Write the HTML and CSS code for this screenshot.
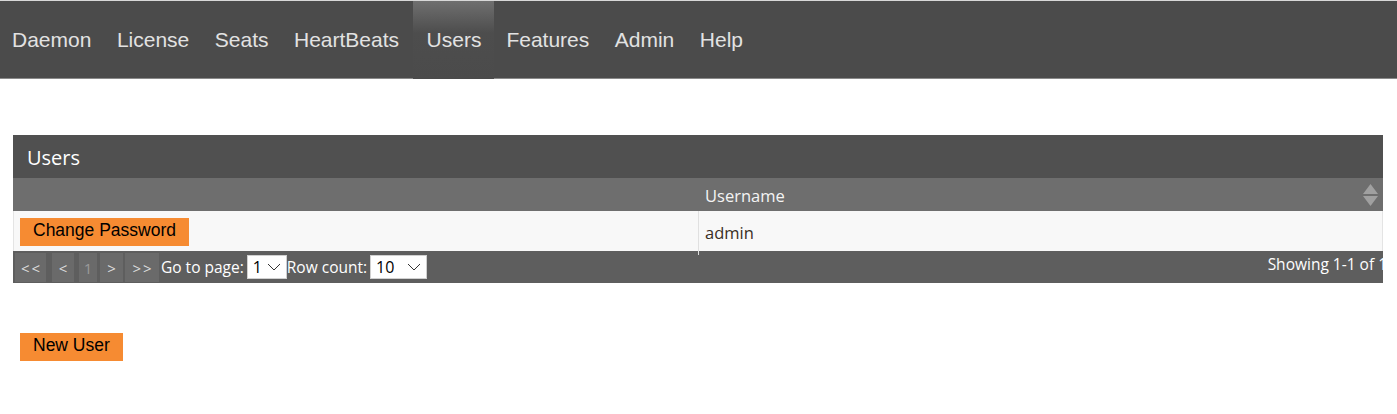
FILE: index.html
```html
<!DOCTYPE html>
<html lang="en">
<head>
<meta charset="utf-8">
<title>Users</title>
<link rel="stylesheet" href="styles.css">
</head>
<body>
  <ul class="topnav">
    <li><a href="#">Daemon</a></li>
    <li><a href="#">License</a></li>
    <li><a href="#">Seats</a></li>
    <li><a href="#">HeartBeats</a></li>
    <li class="active"><a href="#">Users</a></li>
    <li><a href="#">Features</a></li>
    <li><a href="#">Admin</a></li>
    <li><a href="#">Help</a></li>
  </ul>

  <div class="panel">
    <div class="panel-title">Users</div>
    <div class="grid-head">
      <div class="cell"></div>
      <div class="cell head-user">Username
        <svg class="sort" width="15" height="22" viewBox="0 0 15 22">
          <polygon points="7.5,0 15,10 0,10" fill="#a0a0a0"/>
          <polygon points="0,12 15,12 7.5,22" fill="#a0a0a0"/>
        </svg>
      </div>
    </div>
    <div class="grid-row">
      <div class="cell"><button class="btn">Change Password</button></div>
      <div class="cell user">admin</div>
    </div>
    <div class="pager">
      <span class="pbtn first">&lt;&lt;</span>
      <span class="pbtn prev">&lt;</span>
      <span class="pbtn cur off">1</span>
      <span class="pbtn next">&gt;</span>
      <span class="pbtn last">&gt;&gt;</span>
      <span class="plabel">Go to page:</span>
      <div class="fsel sel-page"><span>1</span>
        <svg width="14" height="8" viewBox="0 0 14 8"><polyline points="1,1 7,7 13,1" fill="none" stroke="#333" stroke-width="1"/></svg>
      </div>
      <span class="plabel">Row count:</span>
      <div class="fsel sel-rows"><span>10</span>
        <svg width="14" height="8" viewBox="0 0 14 8"><polyline points="1,1 7,7 13,1" fill="none" stroke="#333" stroke-width="1"/></svg>
      </div>
      <span class="showing">Showing 1-1 of 1</span>
    </div>
  </div>

  <button class="btn new-user">New User</button>
</body>
</html>
```

FILE: styles.css
```css
body {
  margin: 0;
  background-color: #ffffff;
  font-family: "Open Sans", "Noto Sans", sans-serif;
}

.topnav {
  list-style: none;
  margin: 0;
  padding: 0;
  display: flex;
  height: 77px;
  background-color: #4b4b4b;
  border-top: 1px solid #d8d8d8;
  border-bottom: 1px solid #8a8a8a;
}
.topnav li a {
  display: block;
  padding: 0 13.5px 0 12px;
  line-height: 78px;
  font-family: "Liberation Sans", Arial, sans-serif;
  font-size: 21px;
  color: #e2e2e2;
  text-decoration: none;
}
.topnav li.active a {
  padding: 0 13px 0 14px;
  background: linear-gradient(#6f6f6f 0px, #4d4d4d 32px, #4b4b4b 77px);
}

.panel {
  margin: 56px 14px 0 13px;
}
.panel-title {
  height: 43px;
  line-height: 46px;
  padding-left: 14px;
  background-color: #505050;
  color: #ffffff;
  font-size: 20px;
}
.grid-head, .grid-row {
  display: grid;
  grid-template-columns: 685px 1fr;
}
.grid-head {
  height: 33px;
  background-color: #6e6e6e;
  color: #f4f4f4;
  font-size: 16.5px;
}
.head-user {
  position: relative;
  padding-left: 7px;
  line-height: 35px;
}
.sort {
  position: absolute;
  right: 5px;
  top: 6px;
}
.grid-row {
  height: 40px;
  background-color: #f8f8f8;
  border-left: 1px solid #e4e4e4;
  border-right: 1px solid #e4e4e4;
  box-sizing: border-box;
}
.grid-row .cell:first-child {
  padding: 7px 0 0 6px;
  border-right: 1px solid #e0e0e0;
}
.user {
  padding-left: 6px;
  line-height: 44px;
  font-size: 16.5px;
  color: #3a2e24;
}

.btn {
  display: block;
  border: none;
  margin: 0;
  background-color: #f68b32;
  color: #000000;
  font-family: "Liberation Sans", Arial, sans-serif;
  font-size: 17.5px;
  height: 28px;
  padding: 0 13px 4px 13px;
}

.pager {
  display: flex;
  align-items: center;
  height: 32px;
  padding-left: 2px;
  background-color: #5e5e5e;
  color: #ffffff;
  font-size: 15.5px;
}
.pbtn {
  height: 29px;
  line-height: 30px;
  text-align: center;
  background-color: #6a6a6a;
  color: #dcdcdc;
  font-size: 15px;
  letter-spacing: 2px;
  text-indent: 2px;
}
.pbtn.first { width: 31px; margin-right: 6px; }
.pbtn.prev { width: 22px; margin-right: 5px; }
.pbtn.cur { width: 18px; margin-right: 3px; }
.pbtn.next { width: 23px; margin-right: 2px; }
.pbtn.last { width: 34px; margin-right: 2px; }
.pbtn.off {
  color: #9a9a9a;
}
.plabel {
  margin-right: 3px;
}
.fsel {
  display: flex;
  align-items: center;
  justify-content: space-between;
  height: 24px;
  box-sizing: border-box;
  padding: 0 5px 0 5px;
  margin-right: 0;
  background-color: #ffffff;
  border: 1px solid #d0d0d0;
  color: #000000;
  font-size: 16px;
}
.sel-page {
  width: 40px;
}
.sel-rows {
  width: 57px;
}
.showing {
  margin-left: auto;
  margin-right: -4px;
  align-self: flex-start;
  line-height: 27px;
}

.new-user {
  margin: 50px 0 0 20px;
}
```
